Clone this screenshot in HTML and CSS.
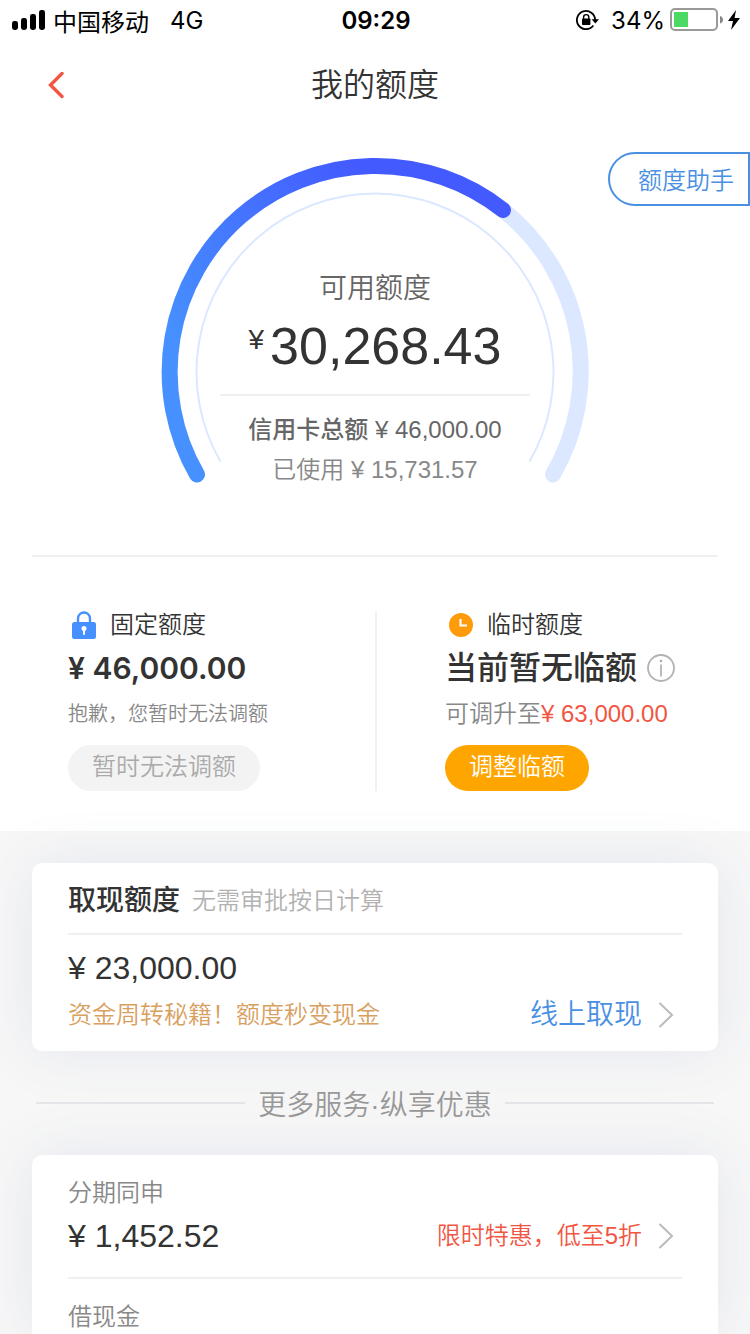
FILE: index.html
```html
<!DOCTYPE html>
<html lang="zh-CN">
<head>
<meta charset="utf-8">
<meta name="viewport" content="width=device-width, initial-scale=1">
<title>我的额度</title>
<link rel="stylesheet" href="styles.css">
</head>
<body>
<div class="app">
  <div class="status">
    <div class="status-left">
      <svg class="signal" viewBox="0 0 34 20" aria-hidden="true">
        <rect x="0" y="11" width="6" height="9" rx="2.4"/>
        <rect x="9" y="8" width="6" height="12" rx="2.4"/>
        <rect x="18" y="4" width="6" height="16" rx="2.4"/>
        <rect x="27" y="0" width="6" height="20" rx="2.4"/>
      </svg>
      <span>中国移动</span>
      <span class="network">4G</span>
    </div>
    <time class="clock">09:29</time>
    <div class="status-right">
      <svg class="rotation" viewBox="0 0 24 20" aria-hidden="true">
        <path d="M17.300 15.500A9.100 9.100 0 1 1 19.100 10" fill="none" stroke="#000" stroke-width="1.8"/>
        <path d="M15.600 9.200h7.400l-3.700 4.200z"/>
        <rect x="6" y="8.500" width="8.400" height="6.500" rx="0.8"/>
        <path d="M7.600 9.400V7.200a2.600 2.600 0 0 1 5.200 0v2.200" fill="none" stroke="#000" stroke-width="1.4"/>
      </svg>
      <span>34%</span>
      <svg class="battery" viewBox="0 0 53 24" aria-hidden="true">
        <rect x="1" y="1" width="46" height="21" rx="4" fill="none" stroke="#999" stroke-width="2"/>
        <rect x="4" y="4" width="14" height="15" fill="#4cd964"/>
        <path d="M50 8q3 1 3 3.700T50 15.500z" fill="#888"/>
      </svg>
      <svg class="bolt" viewBox="0 0 12 20" aria-hidden="true"><path d="M8 0 0 11h5L3 20 12 8H6.600z"/></svg>
    </div>
  </div>

  <header class="nav">
    <button class="back" type="button" aria-label="返回">
      <svg viewBox="0 0 16 28" aria-hidden="true"><path d="M14 2.500 2.500 14 14 25.500"/></svg>
    </button>
    <h1 class="title">我的额度</h1>
  </header>

  <section class="hero">
    <button class="assistant" type="button">额度助手</button>
    <div class="gauge">
      <svg class="dial" viewBox="0 0 428 328" aria-hidden="true">
        <defs>
          <linearGradient id="arc" gradientUnits="userSpaceOnUse" x1="40" y1="220" x2="240" y2="60">
            <stop offset="0" stop-color="#4691ff"/>
            <stop offset="1" stop-color="#435aff"/>
          </linearGradient>
        </defs>
        <path d="M342 53A206 206 0 0 1 392 317.500" fill="none" stroke="#dbe8ff" stroke-width="16" stroke-linecap="round"/>
        <path d="M59.500 304.500A178.500 178.500 0 1 1 368.500 304.500" fill="none" stroke="#dbe8ff" stroke-width="2"/>
        <path d="M36 317.500A206 206 0 0 1 342 53" fill="none" stroke="url(#arc)" stroke-width="16" stroke-linecap="round"/>
      </svg>
      <div class="readout">
        <p class="available">可用额度</p>
        <p class="balance"><span class="currency">¥</span>30,268.43</p>
        <p class="total"><span class="strong">信用卡总额</span> ¥ 46,000.00</p>
        <p class="used">已使用 ¥ 15,731.57</p>
      </div>
    </div>
  </section>

  <section class="limits">
    <div class="limit fixed">
      <h2 class="limit-name">
        <svg class="lock" viewBox="0 0 24 28" aria-hidden="true">
          <path d="M6 12V7.500a6 6 0 0 1 12 0V12" fill="none" stroke="#4691ff" stroke-width="2.400"/>
          <rect x="0" y="11" width="24" height="17" rx="2.500" fill="#4691ff"/>
          <circle cx="12" cy="17.500" r="2.500" fill="#fff"/>
          <rect x="11" y="18" width="2" height="6" rx="1" fill="#fff"/>
        </svg>
        固定额度
      </h2>
      <p class="limit-value sum">¥ 46,000.00</p>
      <p class="limit-note small">抱歉，您暂时无法调额</p>
      <button class="pill muted" type="button" disabled>暂时无法调额</button>
    </div>
    <div class="limit">
      <h2 class="limit-name">
        <svg class="watch" viewBox="0 0 24 24" aria-hidden="true">
          <circle cx="12" cy="12" r="12" fill="#ff9a0a"/>
          <path d="M11.500 6v6.500H18" fill="none" stroke="#fff" stroke-width="2.200"/>
        </svg>
        临时额度
      </h2>
      <p class="limit-value">当前暂无临额
        <svg class="info" viewBox="0 0 28 28" aria-hidden="true">
          <circle cx="14" cy="14" r="13" fill="none" stroke="#b2b2b2" stroke-width="1.800"/>
          <circle cx="14" cy="7" r="1.300" fill="#aaa"/>
          <path d="M14 10.500v12" stroke="#aaa" stroke-width="1.600"/>
        </svg>
      </p>
      <p class="limit-note">可调升至<span class="red">¥ 63,000.00</span></p>
      <button class="pill" type="button">调整临额</button>
    </div>
  </section>

  <main class="services">
    <section class="card">
      <div class="card-head">
        <h2 class="card-title">取现额度</h2>
        <span class="card-tip">无需审批按日计算</span>
      </div>
      <p class="cash">¥ 23,000.00</p>
      <div class="row">
        <span class="gold">资金周转秘籍！额度秒变现金</span>
        <a class="action" href="#">线上取现
          <svg class="chevron" viewBox="0 0 16 28" aria-hidden="true"><path d="M1.500 2 14 14 1.500 26"/></svg>
        </a>
      </div>
    </section>

    <h2 class="more">更多服务·纵享优惠</h2>

    <section class="card list">
      <div class="item">
        <h3 class="item-name">分期同申</h3>
        <div class="row">
          <span class="item-value">¥ 1,452.52</span>
          <a class="action offer" href="#">限时特惠，低至5折
            <svg class="chevron" viewBox="0 0 16 28" aria-hidden="true"><path d="M1.500 2 14 14 1.500 26"/></svg>
          </a>
        </div>
      </div>
      <div class="item">
        <h3 class="item-name">借现金</h3>
      </div>
    </section>
  </main>
</div>
</body>
</html>
```

FILE: styles.css
```css
* {
  box-sizing: border-box;
}

body,
h1,
h2,
h3,
p {
  margin: 0;
  font-weight: 350;
}

body {
  background: #f7f7f7;
  color: #333;
  font-family: "Liberation Sans", "Noto Sans CJK SC", sans-serif;
  font-size: 24px;
}

button {
  border: 0;
  background: none;
  font: inherit;
  padding: 0;
}

a {
  text-decoration: none;
}

svg {
  display: block;
  flex: none;
}

.app {
  display: flex;
  flex-direction: column;
  min-height: 100vh;
}

.status {
  display: grid;
  grid-template-columns: 1fr auto 1fr;
  align-items: center;
  height: 40px;
  padding: 0 10px 0 12px;
  background: #fff;
  color: #000;
  font-family: Inter, "Noto Sans CJK SC", sans-serif;
  font-weight: 400;
}

.status-left,
.status-right {
  display: flex;
  align-items: center;
  gap: 7px;
}

.status-right {
  justify-content: flex-end;
  gap: 5px;
}

.signal {
  width: 34px;
  height: 20px;
}

.network {
  margin-left: 14px;
}

.clock {
  font-weight: 600;
}

.rotation {
  width: 24px;
  height: 20px;
  margin-right: 6px;
}

.battery {
  width: 53px;
  height: 24px;
}

.bolt {
  width: 12px;
  height: 20px;
}

.nav {
  display: grid;
  grid-template-columns: 64px 1fr 64px;
  align-items: center;
  height: 90px;
  padding: 0 24px;
  background: #fff;
}

.back {
  display: flex;
  justify-content: center;
}

.back svg {
  width: 16px;
  height: 28px;
  fill: none;
  stroke: #f25643;
  stroke-width: 3.4;
  stroke-linecap: round;
}

.title {
  font-size: 32px;
  line-height: 44px;
  text-align: center;
}

.hero {
  position: relative;
  padding: 27px 32px 65px;
  background: #fff;
}

.assistant {
  position: absolute;
  top: 22px;
  right: 0;
  height: 54px;
  padding: 0 14px 2px 28px;
  border: 2px solid #4a90e2;
  border-radius: 27px 0 0 27px;
  color: #4a90e2;
}

.gauge {
  display: grid;
  justify-content: center;
}

.dial,
.readout {
  grid-area: 1 / 1;
}

.dial {
  width: 428px;
  height: 328px;
}

.readout {
  justify-self: center;
  width: 310px;
  padding-top: 112px;
  text-align: center;
}

.available {
  color: #666;
  font-size: 28px;
  line-height: 40px;
}

.balance {
  display: flex;
  justify-content: center;
  gap: 6px;
  padding: 4px 0 15px;
  border-bottom: 2px solid #f0f0f0;
  font-size: 52px;
  line-height: 66px;
}

.currency {
  font-size: 28px;
  line-height: 54px;
}

.total {
  margin-top: 14px;
  color: #666;
  line-height: 40px;
}

.strong {
  font-weight: 500;
}

.used {
  color: #888;
  line-height: 40px;
}

.limits {
  display: grid;
  grid-template-columns: 1fr 1fr;
  padding: 0 32px 40px;
  background: #fff;
}

.limits::before {
  content: "";
  grid-column: 1 / -1;
  height: 2px;
  margin-bottom: 54px;
  background: #f0f0f0;
}

.limit {
  display: flex;
  flex-direction: column;
  align-items: flex-start;
}

.fixed {
  padding-left: 36px;
}

.limit + .limit {
  border-left: 2px solid #f0f0f0;
  padding-left: 68px;
}

.limit-name {
  display: flex;
  align-items: center;
  gap: 14px;
  padding-left: 4px;
  font-size: 24px;
  line-height: 28px;
}

.lock {
  width: 24px;
  height: 28px;
}

.watch {
  width: 24px;
  height: 24px;
}

.limit-value {
  display: flex;
  align-items: center;
  gap: 10px;
  margin-top: 8px;
  font-size: 32px;
  font-weight: 500;
  line-height: 42px;
}

.sum {
  font-family: Inter, sans-serif;
  font-size: 30px;
  font-weight: 600;
}

.info {
  width: 28px;
  height: 28px;
}

.limit-note {
  margin-top: 10px;
  color: #888;
  line-height: 30px;
}

.small {
  font-size: 20px;
}

.red {
  color: #f25643;
}

.pill {
  height: 46px;
  margin-top: 16px;
  padding: 0 24px 2px;
  border-radius: 23px;
  background: #ffa500;
  color: #fff;
  line-height: 44px;
}

.muted {
  background: #f3f3f3;
  color: #aaa;
}

.services {
  display: flex;
  flex: 1;
  flex-direction: column;
  padding: 32px 32px 0;
}

.card {
  padding: 0 36px 16px;
  border-radius: 10px;
  background: #fff;
  box-shadow: 0 0 60px rgba(70, 90, 170, 0.1);
}

.card-head {
  display: flex;
  align-items: center;
  gap: 12px;
  height: 72px;
  border-bottom: 2px solid #f0f0f0;
}

.card-title {
  font-size: 28px;
  font-weight: 500;
}

.card-tip {
  color: #b2b2b2;
}

.cash {
  margin: 12px 0 6px;
  font-size: 32px;
  line-height: 42px;
}

.row {
  display: flex;
  align-items: center;
  justify-content: space-between;
  line-height: 40px;
}

.gold {
  color: #d8a05f;
}

.action {
  display: flex;
  align-items: center;
  gap: 16px;
  padding-right: 8px;
  color: #4a90e2;
  font-size: 28px;
}

.offer {
  color: #f25643;
  font-size: 24px;
}

.chevron {
  width: 16px;
  height: 28px;
  fill: none;
  stroke: #bbb;
  stroke-width: 2;
}

.more {
  display: flex;
  align-items: center;
  gap: 13px;
  height: 104px;
  padding: 0 4px;
  color: #999;
  font-size: 28px;
}

.more::before,
.more::after {
  content: "";
  flex: 1;
  height: 2px;
  background: #e4e5e8;
}

.list {
  flex: 1;
  padding-bottom: 0;
  border-radius: 10px 10px 0 0;
}

.item {
  padding-top: 24px;
}

.item + .item {
  border-top: 2px solid #f0f0f0;
}

.item-name {
  color: #888;
  font-size: 24px;
  line-height: 28px;
}

.item .row {
  padding: 8px 0 20px;
  line-height: 42px;
}

.item-value {
  font-size: 32px;
}
```
